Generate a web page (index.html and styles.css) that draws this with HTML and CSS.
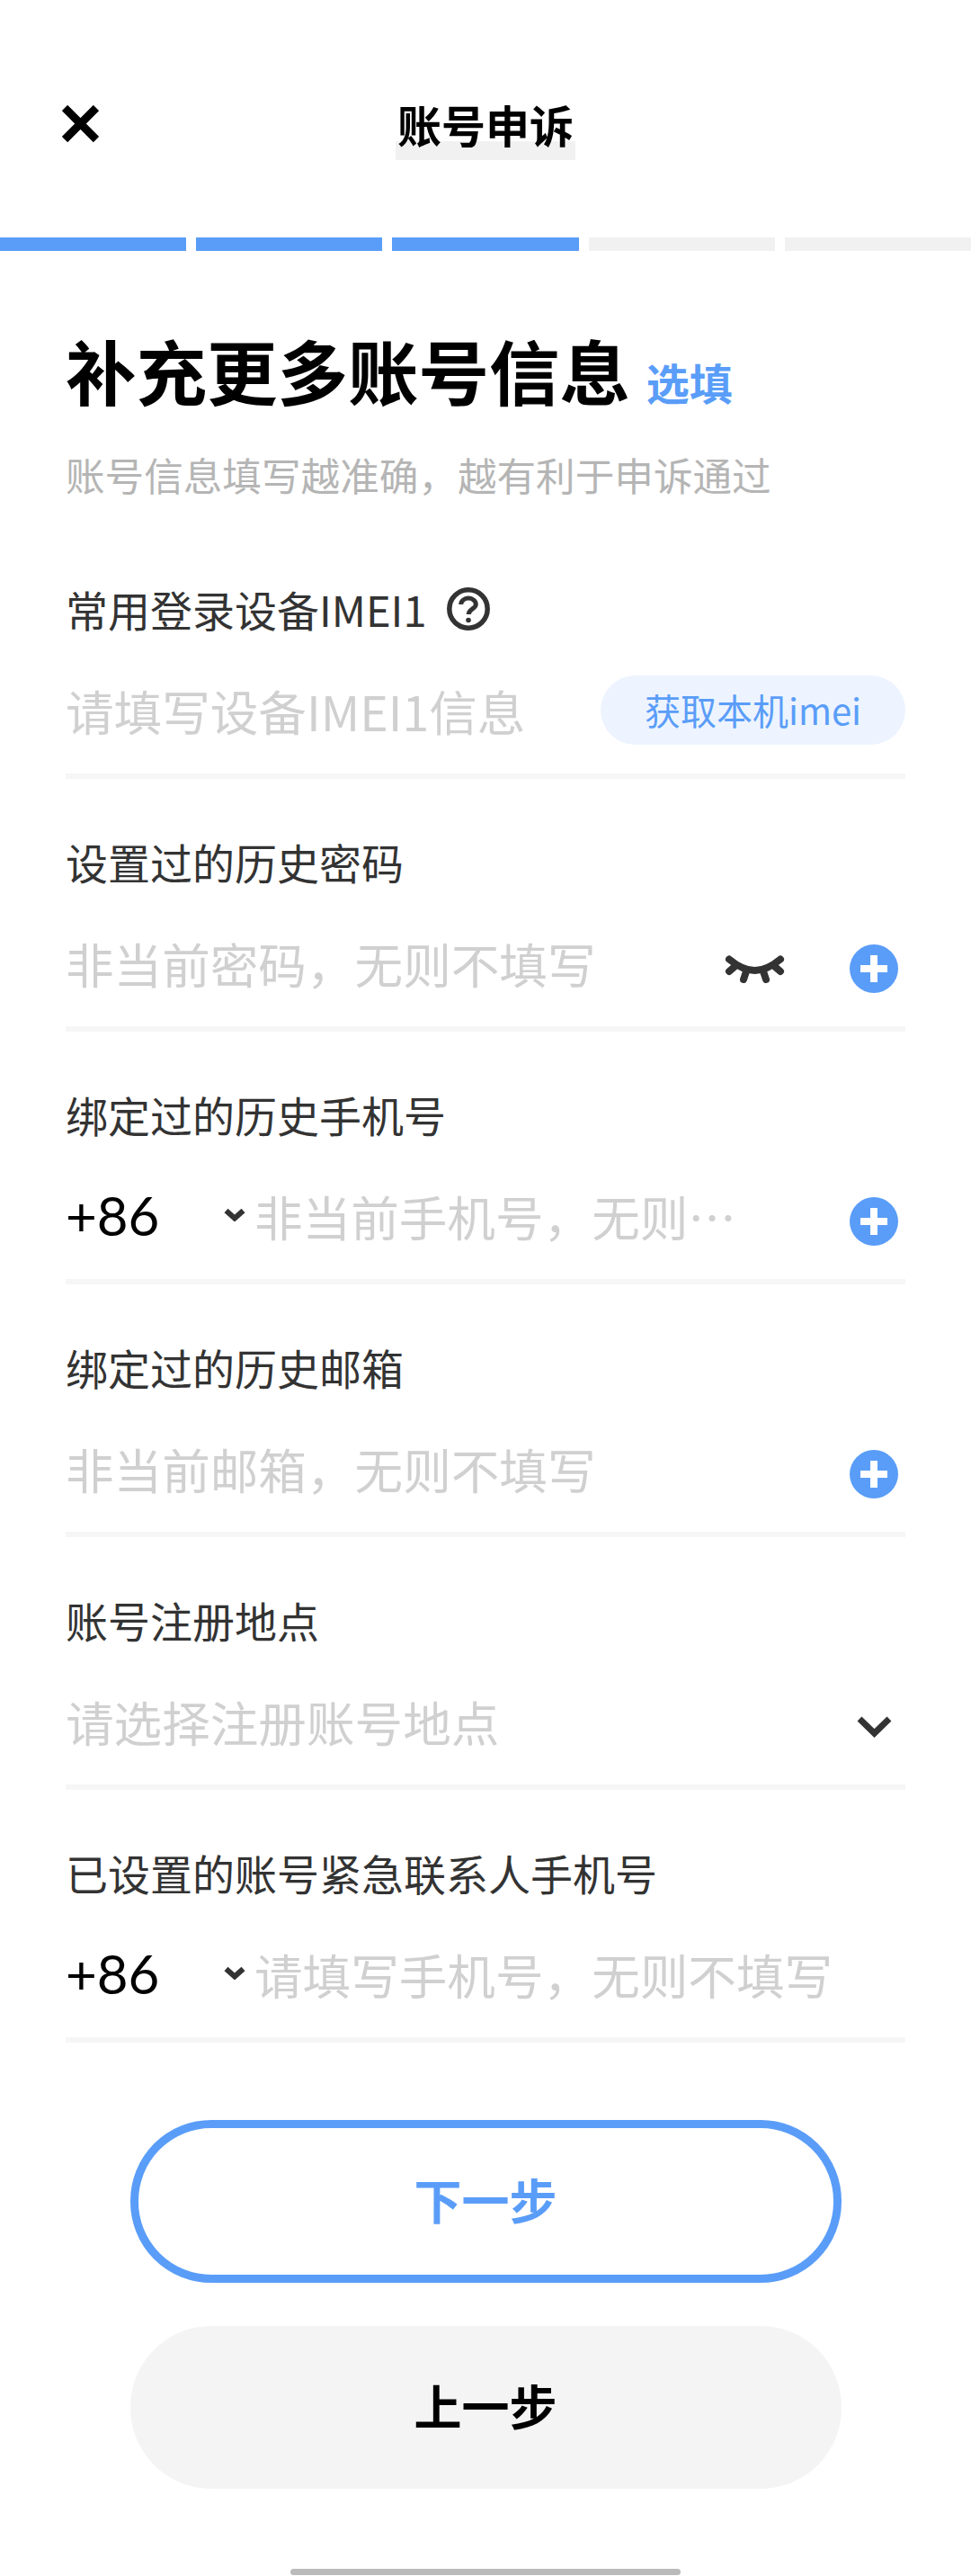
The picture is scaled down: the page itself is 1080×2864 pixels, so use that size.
FILE: index.html
```html
<!DOCTYPE html>
<html lang="zh-CN">
<head>
  <meta charset="UTF-8" />
  <title>账号申诉</title>
  <link rel="stylesheet" href="styles.css">
</head>
<body>
  <div class="page">

    <header class="topbar">
      <svg class="close" width="41" height="41" viewBox="0 0 41 41">
        <path d="M3 3 L38 38 M38 3 L3 38" />
      </svg>
      <h1 class="title">账号申诉</h1>
    </header>

    <div class="steps">
      <span class="step done"></span>
      <span class="step done"></span>
      <span class="step done"></span>
      <span class="step"></span>
      <span class="step"></span>
    </div>

    <section class="intro">
      <h2 class="heading">补充更多账号信息 <span class="optional">选填</span></h2>
      <p class="hint">账号信息填写越准确，越有利于申诉通过</p>
    </section>

    <form class="form">
      <div class="field">
        <div class="label">常用登录设备IMEI1
          <svg class="help" width="48" height="48" viewBox="0 0 48 48">
            <circle cx="24" cy="24" r="21.2" />
            <path d="M15.7 19 a8.3 7 0 0 1 16.6 0 c0 5 -8 5 -8 11" />
            <circle class="dot" cx="24" cy="36.5" r="2.8" />
          </svg>
        </div>
        <div class="control">
          <span class="placeholder">请填写设备IMEI1信息</span>
          <button type="button" class="fetch">获取本机imei</button>
        </div>
      </div>

      <div class="field">
        <div class="label">设置过的历史密码</div>
        <div class="control">
          <span class="placeholder">非当前密码，无则不填写</span>
          <svg class="eye" width="67" height="31" viewBox="0 0 67 31">
            <path d="M5 4.5 C14 12 23 17 33.5 17 C44 17 53 12 62 4.5 M5 18 L12 12 M21 27 L24 18 M46 27 L43 18 M62 18 L55 12" />
          </svg>
          <span class="add"></span>
        </div>
      </div>

      <div class="field">
        <div class="label">绑定过的历史手机号</div>
        <div class="control">
          <div class="country">
            <span class="code">+86</span>
            <svg class="chevron-small" width="24" height="15" viewBox="0 0 24 15">
              <path d="M2.5 3 L12 11.5 L21.5 3" />
            </svg>
          </div>
          <span class="placeholder">非当前手机号，无则…</span>
          <span class="add"></span>
        </div>
      </div>

      <div class="field">
        <div class="label">绑定过的历史邮箱</div>
        <div class="control">
          <span class="placeholder">非当前邮箱，无则不填写</span>
          <span class="add"></span>
        </div>
      </div>

      <div class="field">
        <div class="label">账号注册地点</div>
        <div class="control">
          <span class="placeholder">请选择注册账号地点</span>
          <svg class="chevron" width="39" height="24" viewBox="0 0 39 24">
            <path d="M3 3 L19.5 19 L36 3" />
          </svg>
        </div>
      </div>

      <div class="field">
        <div class="label">已设置的账号紧急联系人手机号</div>
        <div class="control">
          <div class="country">
            <span class="code">+86</span>
            <svg class="chevron-small" width="24" height="15" viewBox="0 0 24 15">
              <path d="M2.5 3 L12 11.5 L21.5 3" />
            </svg>
          </div>
          <span class="placeholder">请填写手机号，无则不填写</span>
        </div>
      </div>
    </form>

    <div class="actions">
      <button type="button" class="btn btn-next">下一步</button>
      <button type="button" class="btn btn-prev">上一步</button>
    </div>

    <div class="home-bar"></div>
  </div>
</body>
</html>
```

FILE: styles.css
```css
:root {
  --blue: #5a9df8;
  --text: #333333;
  --line: #f6f6f6;
}

* {
  box-sizing: border-box;
}

body {
  margin: 0;
  background: #ffffff;
  color: var(--text);
  font-family: "Noto Sans CJK SC", "Noto Sans", sans-serif;
}

.page {
  width: 1080px;
  height: 2864px;
  overflow: hidden;
}

/* top bar */
.topbar {
  display: flex;
  align-items: center;
  justify-content: center;
  position: relative;
  height: 264px;
  padding-top: 12px;
}

.close {
  position: absolute;
  left: 69px;
  top: 117px;
}

.close path {
  fill: none;
  stroke: #000000;
  stroke-width: 9;
}

.title {
  position: relative;
  z-index: 0;
  margin: 0;
  width: 200px;
  text-align: center;
  font-size: 49px;
  line-height: 70px;
  font-weight: 700;
  color: #000000;
}

.title::after {
  content: "";
  position: absolute;
  z-index: -1;
  left: 0;
  right: 0;
  bottom: -5px;
  height: 21px;
  background: #f1f1f1;
}

/* progress */
.steps {
  display: flex;
  gap: 11px;
}

.step {
  flex: 1;
  height: 15px;
  background: #f1f1f1;
}

.step.done {
  background: var(--blue);
}

/* intro */
.intro {
  padding: 82px 73px 0;
}

.heading {
  margin: 0;
  font-size: 78.5px;
  line-height: 100px;
  font-weight: 700;
  color: #000000;
}

.optional {
  font-size: 48px;
  font-weight: 700;
  color: var(--blue);
}

.hint {
  margin: 23px 0 0;
  font-size: 43.6px;
  line-height: 60px;
  color: #b5b5b5;
}

/* form */
.form {
  margin-top: 28px;
  padding: 0 73px;
}

.field {
  height: 281px;
  padding-top: 63px;
  border-bottom: 6px solid var(--line);
}

.label {
  display: flex;
  align-items: center;
  gap: 23px;
  height: 60px;
  margin-top: -1px;
  font-size: 47px;
  line-height: 60px;
}

.control {
  display: flex;
  align-items: center;
  height: 90px;
  margin-top: 44px;
  padding-right: 8px;
}

.placeholder {
  flex: 1;
  min-width: 0;
  margin-bottom: 12px;
  font-size: 53.6px;
  line-height: 70px;
  color: #d0d0d0;
  white-space: nowrap;
}

.fetch {
  width: 339px;
  height: 77px;
  margin-right: -8px;
  margin-bottom: 14px;
  border: none;
  border-radius: 39px;
  background: #edf4ff;
  color: var(--blue);
  font-family: inherit;
  font-size: 40px;
  padding: 0;
}

.help circle {
  fill: none;
  stroke: var(--text);
  stroke-width: 5.5;
}

.help path {
  fill: none;
  stroke: var(--text);
  stroke-width: 5;
}

.help .dot {
  fill: var(--text);
  stroke: none;
}

.eye {
  margin-right: 72px;
}

.eye path,
.chevron path,
.chevron-small path {
  fill: none;
  stroke: var(--text);
}

.eye path {
  stroke-width: 8;
  stroke-linecap: round;
}

.add {
  position: relative;
  flex: none;
  width: 54px;
  height: 54px;
  border-radius: 50%;
  background: var(--blue);
}

.add::before,
.add::after {
  content: "";
  position: absolute;
  background: #ffffff;
}

.add::before {
  left: 12px;
  right: 12px;
  top: 23px;
  height: 8px;
}

.add::after {
  top: 12px;
  bottom: 12px;
  left: 23px;
  width: 8px;
}

.country {
  display: flex;
  align-items: center;
  justify-content: space-between;
  flex: none;
  width: 210px;
  padding-right: 10px;
  margin-bottom: 15px;
}

.code {
  font-family: "Lato", sans-serif;
  font-size: 60px;
  line-height: 70px;
  color: #000000;
}

.chevron-small path {
  stroke-width: 6;
}

.chevron {
  margin-right: 7px;
}

.chevron path {
  stroke-width: 7;
}

/* buttons */
.actions {
  display: flex;
  flex-direction: column;
  gap: 48px;
  width: 791px;
  margin: 86px auto 0;
}

.btn {
  height: 181px;
  border-radius: 90px;
  border: none;
  padding: 0 0 6px;
  font-family: inherit;
  font-size: 53px;
  font-weight: 700;
}

.btn-next {
  border: 9px solid var(--blue);
  background: #ffffff;
  color: var(--blue);
}

.btn-prev {
  background: #f4f4f4;
  color: #000000;
}

.home-bar {
  width: 434px;
  height: 7px;
  margin: 89px auto 0;
  border-radius: 4px;
  background: #bbbbbb;
}
```
